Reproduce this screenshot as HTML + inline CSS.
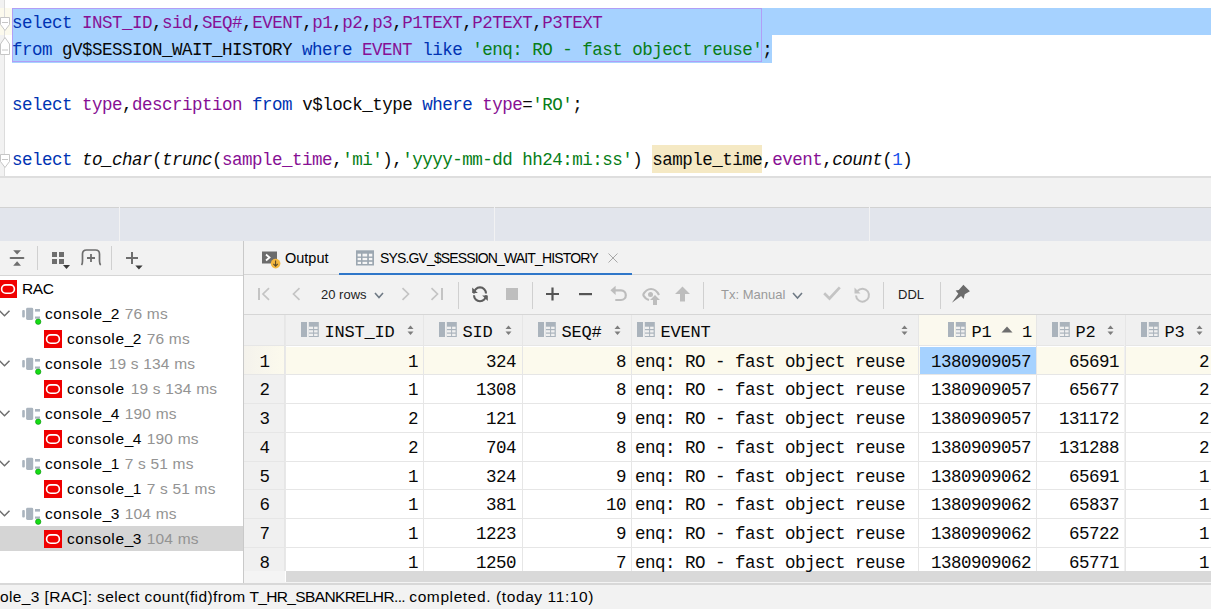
<!DOCTYPE html><html><head><meta charset="utf-8"><style>
*{margin:0;padding:0;box-sizing:border-box}
html,body{width:1211px;height:609px;overflow:hidden;background:#fff;position:relative;font-family:"Liberation Sans",sans-serif}
.a{position:absolute}
svg.a{overflow:visible}
.ln{position:absolute;left:12px;height:27.4px;line-height:27.4px;font-size:17.5px;letter-spacing:-0.5px;white-space:pre;font-family:"Liberation Mono",monospace;color:#080808}
.kw{color:#0033b3}.id{color:#871094}.st{color:#067d17}.nu{color:#1750eb}.fn{font-style:italic}
.c{position:absolute;height:28px;line-height:28px;font-size:17.5px;letter-spacing:-0.5px;font-family:"Liberation Mono",monospace;white-space:pre;color:#080808}
.r{text-align:right}
.t{position:absolute;font-size:15.5px;white-space:pre;color:#000;line-height:1}
.tm{color:#939393}
</style></head><body>
<div class="a" style="left:0px;top:0px;width:1211px;height:176px;background:#fff;"></div>
<div class="a" style="left:0px;top:0px;width:4px;height:176px;background:#f2f2f2;"></div>
<div class="a" style="left:0px;top:8px;width:12px;height:27px;background:#fcfaed;"></div>
<div class="a" style="left:4px;top:0px;width:1px;height:176px;background:#dcdcdc;"></div>
<div class="a" style="left:12px;top:8px;width:1199px;height:27px;background:#a6d2ff;"></div>
<div class="a" style="left:12px;top:35px;width:760px;height:28px;background:#a6d2ff;"></div>
<div class="a" style="left:12px;top:8px;width:750px;height:54px;border:1px solid #b09ef6"></div>
<div class="a" style="left:652px;top:145px;width:110px;height:28px;background:#f5e9c4;"></div>
<svg class="a" style="left:0px;top:16px;" width="11" height="17" viewBox="0 0 11 17"><path d="M0.5 1.5H9.5V8.5L5 14.5L0.5 8.5Z" fill="#fff" stroke="#c6c6c6" stroke-width="1"/><path d="M2 6.5H8" stroke="#c6c6c6" stroke-width="1"/></svg>
<svg class="a" style="left:0px;top:36px;" width="11" height="20" viewBox="0 0 11 20"><path d="M0.5 18.5H9.5V8L5 1.5L0.5 8Z" fill="#fff" stroke="#c6c6c6" stroke-width="1"/><path d="M2 14H8" stroke="#c6c6c6" stroke-width="1"/></svg>
<svg class="a" style="left:0px;top:153px;" width="11" height="17" viewBox="0 0 11 17"><path d="M0.5 1.5H9.5V8.5L5 14.5L0.5 8.5Z" fill="#fff" stroke="#c6c6c6" stroke-width="1"/><path d="M2 6.5H8" stroke="#c6c6c6" stroke-width="1"/></svg>
<div class="ln" style="top:9.5px"><span class="kw">select</span> <span class="id">INST_ID</span>,<span class="id">sid</span>,<span class="id">SEQ#</span>,<span class="id">EVENT</span>,<span class="id">p1</span>,<span class="id">p2</span>,<span class="id">p3</span>,<span class="id">P1TEXT</span>,<span class="id">P2TEXT</span>,<span class="id">P3TEXT</span></div>
<div class="ln" style="top:36.9px"><span class="kw">from</span> gV$SESSION_WAIT_HISTORY <span class="kw">where</span> <span class="id">EVENT</span> <span class="kw">like</span> <span class="st">'enq: RO - fast object reuse'</span>;</div>
<div class="ln" style="top:91.7px"><span class="kw">select</span> <span class="id">type</span>,<span class="id">description</span> <span class="kw">from</span> v$lock_type <span class="kw">where</span> <span class="id">type</span>=<span class="st">'RO'</span>;</div>
<div class="ln" style="top:146.5px"><span class="kw">select</span> <span class="fn">to_char</span>(<span class="fn">trunc</span>(<span class="id">sample_time</span>,<span class="st">'mi'</span>),<span class="st">'yyyy-mm-dd hh24:mi:ss'</span>) sample_time,<span class="id">event</span>,<span class="fn">count</span>(<span class="nu">1</span>)</div>
<div class="a" style="left:0px;top:176px;width:1211px;height:2px;background:#dedede;"></div>
<div class="a" style="left:0px;top:178px;width:1211px;height:29px;background:#f2f2f2;"></div>
<div class="a" style="left:0px;top:207px;width:1211px;height:1px;background:#d2d2d2;"></div>
<div class="a" style="left:0px;top:208px;width:1211px;height:33px;background:#e2e5ec;"></div>
<div class="a" style="left:119px;top:207px;width:1px;height:34px;background:#f2f2f3;"></div>
<div class="a" style="left:494px;top:207px;width:1px;height:34px;background:#f2f2f3;"></div>
<div class="a" style="left:869px;top:207px;width:1px;height:34px;background:#f2f2f3;"></div>
<div class="a" style="left:0px;top:241px;width:243px;height:34px;background:#f2f2f2;"></div>
<div class="a" style="left:0px;top:275px;width:243px;height:1px;background:#d6d6d6;"></div>
<div class="a" style="left:0px;top:276px;width:243px;height:307px;background:#fff;"></div>
<div class="a" style="left:243px;top:241px;width:1px;height:342px;background:#c9c9c9;"></div>
<div class="a" style="left:0px;top:526px;width:243px;height:25px;background:#d5d5d5;"></div>
<svg class="a" style="left:9px;top:249px;" width="16" height="17" viewBox="0 0 16 17"><path d="M4.2 1.3h7.8l-3.9 4.3z" fill="#6e6e6e"/><rect x="0.6" y="8" width="14.8" height="2" rx="1" fill="#6e6e6e"/><path d="M4.2 16.7h7.8l-3.9-4.4z" fill="#6e6e6e"/></svg>
<div class="a" style="left:37px;top:246px;width:1px;height:24px;background:#d0d0d0;"></div>
<svg class="a" style="left:51px;top:252px;" width="20" height="18" viewBox="0 0 20 18"><rect x="1" y="0" width="5" height="5" fill="#6e6e6e"/><rect x="8" y="0" width="5" height="5" fill="#6e6e6e"/><rect x="1" y="7" width="5" height="5" fill="#6e6e6e"/><rect x="8" y="7" width="5" height="5" fill="#6e6e6e"/><path d="M12 13h7l-3.5 4z" fill="#3a3a3a"/></svg>
<svg class="a" style="left:80px;top:249px;" width="22" height="17" viewBox="0 0 22 17"><path d="M1.5 16c1-1 1-2 1-4V5c0-3 2-4 4-4h9c2 0 4 1 4 4v7c0 2 0 3 1.2 4" fill="none" stroke="#6e6e6e" stroke-width="1.7"/><path d="M11 5v8M7 9h8" stroke="#6e6e6e" stroke-width="1.8"/></svg>
<div class="a" style="left:111px;top:246px;width:1px;height:24px;background:#d0d0d0;"></div>
<svg class="a" style="left:125px;top:251px;" width="20" height="19" viewBox="0 0 20 19"><path d="M7 1v12M1 7h12" stroke="#6e6e6e" stroke-width="2"/><path d="M10.3 14.5h7.3l-3.65 4z" fill="#3a3a3a"/></svg>
<svg class="a" style="left:-1px;top:280px;" width="18" height="18" viewBox="0 0 18 18"><rect width="18" height="18" fill="#f00000"/><rect x="2.6" y="4.9" width="12.8" height="8.3" rx="4.15" fill="none" stroke="#fff" stroke-width="1.6"/></svg>
<div class="t" style="left:22px;top:281px;letter-spacing:-0.4px">RAC</div>
<svg class="a" style="left:-1px;top:309px;" width="12" height="8" viewBox="0 0 12 8"><path d="M0.5 1.7l5 5 5-5" fill="none" stroke="#6e6e6e" stroke-width="1.5"/></svg>
<svg class="a" style="left:22px;top:307px;" width="20" height="18" viewBox="0 0 20 18"><rect x="0.2" y="3.1" width="2.6" height="7.4" rx="1" fill="#aab4be"/><rect x="4.1" y="0.8" width="7.1" height="12.1" rx="1.4" fill="#aab4be"/><rect x="13" y="2" width="5" height="2.6" fill="#aab4be"/><rect x="13" y="9.5" width="5" height="2.2" fill="#aab4be"/><circle cx="16.2" cy="14.7" r="2.7" fill="#16dc16" stroke="#0c8f0c" stroke-width="0.6"/></svg>
<div class="t" style="left:45px;top:306.3px"><span style="letter-spacing:0.6px">console</span><span style="letter-spacing:-0.6px">_2</span><span class="tm" style="margin-left:6px;letter-spacing:0.2px">76 ms</span></div>
<svg class="a" style="left:44px;top:330px;" width="18" height="18" viewBox="0 0 18 18"><rect width="18" height="18" fill="#f00000"/><rect x="2.6" y="4.9" width="12.8" height="8.3" rx="4.15" fill="none" stroke="#fff" stroke-width="1.6"/></svg>
<div class="t" style="left:67px;top:331.3px"><span style="letter-spacing:0.6px">console</span><span style="letter-spacing:-0.6px">_2</span><span class="tm" style="margin-left:6px;letter-spacing:0.2px">76 ms</span></div>
<svg class="a" style="left:-1px;top:359px;" width="12" height="8" viewBox="0 0 12 8"><path d="M0.5 1.7l5 5 5-5" fill="none" stroke="#6e6e6e" stroke-width="1.5"/></svg>
<svg class="a" style="left:22px;top:357px;" width="20" height="18" viewBox="0 0 20 18"><rect x="0.2" y="3.1" width="2.6" height="7.4" rx="1" fill="#aab4be"/><rect x="4.1" y="0.8" width="7.1" height="12.1" rx="1.4" fill="#aab4be"/><rect x="13" y="2" width="5" height="2.6" fill="#aab4be"/><rect x="13" y="9.5" width="5" height="2.2" fill="#aab4be"/><circle cx="16.2" cy="14.7" r="2.7" fill="#16dc16" stroke="#0c8f0c" stroke-width="0.6"/></svg>
<div class="t" style="left:45px;top:356.3px"><span style="letter-spacing:0.6px">console</span><span class="tm" style="margin-left:6px;letter-spacing:0.2px">19 s 134 ms</span></div>
<svg class="a" style="left:44px;top:380px;" width="18" height="18" viewBox="0 0 18 18"><rect width="18" height="18" fill="#f00000"/><rect x="2.6" y="4.9" width="12.8" height="8.3" rx="4.15" fill="none" stroke="#fff" stroke-width="1.6"/></svg>
<div class="t" style="left:67px;top:381.3px"><span style="letter-spacing:0.6px">console</span><span class="tm" style="margin-left:6px;letter-spacing:0.2px">19 s 134 ms</span></div>
<svg class="a" style="left:-1px;top:409px;" width="12" height="8" viewBox="0 0 12 8"><path d="M0.5 1.7l5 5 5-5" fill="none" stroke="#6e6e6e" stroke-width="1.5"/></svg>
<svg class="a" style="left:22px;top:407px;" width="20" height="18" viewBox="0 0 20 18"><rect x="0.2" y="3.1" width="2.6" height="7.4" rx="1" fill="#aab4be"/><rect x="4.1" y="0.8" width="7.1" height="12.1" rx="1.4" fill="#aab4be"/><rect x="13" y="2" width="5" height="2.6" fill="#aab4be"/><rect x="13" y="9.5" width="5" height="2.2" fill="#aab4be"/><circle cx="16.2" cy="14.7" r="2.7" fill="#16dc16" stroke="#0c8f0c" stroke-width="0.6"/></svg>
<div class="t" style="left:45px;top:406.3px"><span style="letter-spacing:0.6px">console</span><span style="letter-spacing:-0.6px">_4</span><span class="tm" style="margin-left:6px;letter-spacing:0.2px">190 ms</span></div>
<svg class="a" style="left:44px;top:430px;" width="18" height="18" viewBox="0 0 18 18"><rect width="18" height="18" fill="#f00000"/><rect x="2.6" y="4.9" width="12.8" height="8.3" rx="4.15" fill="none" stroke="#fff" stroke-width="1.6"/></svg>
<div class="t" style="left:67px;top:431.3px"><span style="letter-spacing:0.6px">console</span><span style="letter-spacing:-0.6px">_4</span><span class="tm" style="margin-left:6px;letter-spacing:0.2px">190 ms</span></div>
<svg class="a" style="left:-1px;top:459px;" width="12" height="8" viewBox="0 0 12 8"><path d="M0.5 1.7l5 5 5-5" fill="none" stroke="#6e6e6e" stroke-width="1.5"/></svg>
<svg class="a" style="left:22px;top:457px;" width="20" height="18" viewBox="0 0 20 18"><rect x="0.2" y="3.1" width="2.6" height="7.4" rx="1" fill="#aab4be"/><rect x="4.1" y="0.8" width="7.1" height="12.1" rx="1.4" fill="#aab4be"/><rect x="13" y="2" width="5" height="2.6" fill="#aab4be"/><rect x="13" y="9.5" width="5" height="2.2" fill="#aab4be"/><circle cx="16.2" cy="14.7" r="2.7" fill="#16dc16" stroke="#0c8f0c" stroke-width="0.6"/></svg>
<div class="t" style="left:45px;top:456.3px"><span style="letter-spacing:0.6px">console</span><span style="letter-spacing:-0.6px">_1</span><span class="tm" style="margin-left:6px;letter-spacing:0.2px">7 s 51 ms</span></div>
<svg class="a" style="left:44px;top:480px;" width="18" height="18" viewBox="0 0 18 18"><rect width="18" height="18" fill="#f00000"/><rect x="2.6" y="4.9" width="12.8" height="8.3" rx="4.15" fill="none" stroke="#fff" stroke-width="1.6"/></svg>
<div class="t" style="left:67px;top:481.3px"><span style="letter-spacing:0.6px">console</span><span style="letter-spacing:-0.6px">_1</span><span class="tm" style="margin-left:6px;letter-spacing:0.2px">7 s 51 ms</span></div>
<svg class="a" style="left:-1px;top:509px;" width="12" height="8" viewBox="0 0 12 8"><path d="M0.5 1.7l5 5 5-5" fill="none" stroke="#6e6e6e" stroke-width="1.5"/></svg>
<svg class="a" style="left:22px;top:507px;" width="20" height="18" viewBox="0 0 20 18"><rect x="0.2" y="3.1" width="2.6" height="7.4" rx="1" fill="#aab4be"/><rect x="4.1" y="0.8" width="7.1" height="12.1" rx="1.4" fill="#aab4be"/><rect x="13" y="2" width="5" height="2.6" fill="#aab4be"/><rect x="13" y="9.5" width="5" height="2.2" fill="#aab4be"/><circle cx="16.2" cy="14.7" r="2.7" fill="#16dc16" stroke="#0c8f0c" stroke-width="0.6"/></svg>
<div class="t" style="left:45px;top:506.3px"><span style="letter-spacing:0.6px">console</span><span style="letter-spacing:-0.6px">_3</span><span class="tm" style="margin-left:6px;letter-spacing:0.2px">104 ms</span></div>
<svg class="a" style="left:44px;top:530px;" width="18" height="18" viewBox="0 0 18 18"><rect width="18" height="18" fill="#f00000"/><rect x="2.6" y="4.9" width="12.8" height="8.3" rx="4.15" fill="none" stroke="#fff" stroke-width="1.6"/></svg>
<div class="t" style="left:67px;top:531.3px"><span style="letter-spacing:0.6px">console</span><span style="letter-spacing:-0.6px">_3</span><span class="tm" style="margin-left:6px;letter-spacing:0.2px">104 ms</span></div>
<div class="a" style="left:244px;top:241px;width:967px;height:33px;background:#f2f2f2;"></div>
<div class="a" style="left:244px;top:274px;width:967px;height:1px;background:#d6d6d6;"></div>
<div class="a" style="left:339px;top:273px;width:293px;height:2px;background:#2f77c9;"></div>
<div class="a" style="left:244px;top:275px;width:967px;height:39px;background:#f2f2f2;"></div>
<div class="a" style="left:244px;top:314px;width:967px;height:1px;background:#d6d6d6;"></div>
<svg class="a" style="left:262px;top:251px;" width="16" height="18" viewBox="0 0 16 18"><rect x="0" y="0.5" width="15" height="12" fill="#6c6c6c"/><path d="M4 3.5l3.5 3-3.5 3" fill="none" stroke="#fff" stroke-width="1.8"/><circle cx="13.6" cy="12.6" r="4.8" fill="#f4b73f"/><path d="M13.6 9.5v5.5M11.4 12.8l2.2 2.3 2.2-2.3" fill="none" stroke="#5a4a2a" stroke-width="1.1"/></svg>
<div class="a" style="left:285px;top:251px;font-size:14.5px;line-height:1;white-space:pre">Output</div>
<svg class="a" style="left:356px;top:250px;" width="18" height="16" viewBox="0 0 18 16"><rect x="0" y="0.3" width="18" height="15.2" fill="#9ca7b1"/><g fill="#f6f6f6"><rect x="1.6" y="3.7" width="3.4" height="2.8"/><rect x="6.5" y="3.7" width="4.699999999999999" height="2.8"/><rect x="12.9" y="3.7" width="3.4000000000000004" height="2.8"/><rect x="1.6" y="7.9" width="3.4" height="2.3"/><rect x="6.5" y="7.9" width="4.699999999999999" height="2.3"/><rect x="12.9" y="7.9" width="3.4000000000000004" height="2.3"/><rect x="1.6" y="11.8" width="3.4" height="2.2"/><rect x="6.5" y="11.8" width="4.699999999999999" height="2.2"/><rect x="12.9" y="11.8" width="3.4000000000000004" height="2.2"/></g></svg>
<div class="a" style="left:380px;top:251px;font-size:14px;letter-spacing:-0.86px;line-height:1;white-space:pre">SYS.GV_$SESSION_WAIT_HISTORY</div>
<svg class="a" style="left:608px;top:253px;" width="10" height="10" viewBox="0 0 10 10"><path d="M0.5 0.5l9 9M9.5 0.5l-9 9" stroke="#a8a8a8" stroke-width="1"/></svg>
<svg class="a" style="left:257px;top:287px;" width="14" height="14" viewBox="0 0 14 14"><path d="M2 1v12" stroke="#c4c4c4" stroke-width="2"/><path d="M12 1.2l-6 5.8 6 5.8" fill="none" stroke="#c4c4c4" stroke-width="1.7"/></svg>
<svg class="a" style="left:292px;top:287px;" width="9" height="14" viewBox="0 0 9 14"><path d="M7.5 1.2l-6 5.8 6 5.8" fill="none" stroke="#c4c4c4" stroke-width="1.7"/></svg>
<div class="a" style="left:321px;top:288px;font-size:13px;line-height:1;white-space:pre;color:#222">20 rows</div>
<svg class="a" style="left:374px;top:292px;" width="10" height="7" viewBox="0 0 10 7"><path d="M1 1l4 4.5 4-4.5" fill="none" stroke="#6f7a85" stroke-width="1.6"/></svg>
<svg class="a" style="left:401px;top:287px;" width="9" height="14" viewBox="0 0 9 14"><path d="M1.5 1.2l6 5.8-6 5.8" fill="none" stroke="#c4c4c4" stroke-width="1.7"/></svg>
<svg class="a" style="left:430px;top:287px;" width="14" height="14" viewBox="0 0 14 14"><path d="M12 1v12" stroke="#c4c4c4" stroke-width="2"/><path d="M1.5 1.2l6 5.8-6 5.8" fill="none" stroke="#c4c4c4" stroke-width="1.7"/></svg>
<div class="a" style="left:458px;top:282px;width:1px;height:27px;background:#d0d0d0;"></div>
<svg class="a" style="left:471px;top:286px;" width="17" height="17" viewBox="0 0 17 17"><path d="M3 7.4A6 6 0 0 1 15 7.4M3 9.2A6 6 0 0 0 15 9.2" fill="none" stroke="#5e5e5e" stroke-width="2.1"/><path d="M1.2 1.5v5.6h5.6z" fill="#5e5e5e"/><path d="M16.8 15v-5.6h-5.6z" fill="#5e5e5e"/></svg>
<div class="a" style="left:506px;top:288px;width:12px;height:12px;background:#bebebe;"></div>
<div class="a" style="left:532px;top:282px;width:1px;height:27px;background:#d0d0d0;"></div>
<svg class="a" style="left:546px;top:287px;" width="14" height="14" viewBox="0 0 14 14"><path d="M6.5 0.5v13M0 7h13" stroke="#555555" stroke-width="2.2"/></svg>
<svg class="a" style="left:579px;top:292px;" width="14" height="4" viewBox="0 0 14 4"><rect x="0" y="1" width="13" height="2.2" fill="#555555"/></svg>
<svg class="a" style="left:610px;top:286px;" width="18" height="17" viewBox="0 0 18 17"><path d="M3 4.3h8c2.8 0 4.8 2.2 4.8 4.85S13.8 14 11 14H5.3" fill="none" stroke="#bdbdbd" stroke-width="2.2"/><path d="M0.4 4.3L5.6 -0.3V8.9z" fill="#bdbdbd"/></svg>
<svg class="a" style="left:642px;top:287px;" width="19" height="18" viewBox="0 0 19 18"><path d="M1 8c2-4 5-6 8-6s6 2 8 6" fill="none" stroke="#bdbdbd" stroke-width="2.2"/><path d="M1 8c2 3 4 4.5 6 5" fill="none" stroke="#bdbdbd" stroke-width="2.2"/><circle cx="8.5" cy="7.5" r="2.5" fill="#bdbdbd"/><path d="M13 8l-5 5h3v5h4v-5h3z" fill="#bdbdbd"/></svg>
<svg class="a" style="left:675px;top:286px;" width="16" height="16" viewBox="0 0 16 16"><path d="M7.5 0.5L0 8h5v7.5h5V8h5z" fill="#bdbdbd"/></svg>
<div class="a" style="left:703px;top:282px;width:1px;height:27px;background:#d0d0d0;"></div>
<div class="a" style="left:721px;top:288px;font-size:13px;line-height:1;white-space:pre;color:#9a9a9a">Tx: Manual</div>
<svg class="a" style="left:792px;top:292px;" width="11" height="8" viewBox="0 0 11 8"><path d="M1 1l4.5 5 4.5-5" fill="none" stroke="#6f7a85" stroke-width="1.6"/></svg>
<svg class="a" style="left:823px;top:286px;" width="18" height="15" viewBox="0 0 18 15"><path d="M1.2 7.2l5.3 5.3L16.8 1.3" fill="none" stroke="#c4c4c4" stroke-width="2.7"/></svg>
<svg class="a" style="left:854px;top:286px;" width="17" height="17" viewBox="0 0 17 17"><path d="M3.5 5A6.5 6.5 0 1 1 2 9.5" fill="none" stroke="#c2c2c2" stroke-width="2"/><path d="M0.5 1.5v6h6z" fill="#c2c2c2"/></svg>
<div class="a" style="left:883px;top:282px;width:1px;height:27px;background:#d0d0d0;"></div>
<div class="a" style="left:898px;top:288px;font-size:13px;line-height:1;white-space:pre;color:#222">DDL</div>
<div class="a" style="left:940px;top:282px;width:1px;height:27px;background:#d0d0d0;"></div>
<svg class="a" style="left:945px;top:280px;" width="30" height="28" viewBox="0 0 30 28"><path d="M10.6 10.4L13.8 9.9L18.4 4.8L24.9 11.3L19.8 14.3L18.6 18.9L16.1 15.9L6.9 22.8L13.3 13.8Z" fill="#6b6b6b"/></svg>
<div class="a" style="left:244px;top:315px;width:967px;height:268px;background:#fff;"></div>
<div class="a" style="left:244px;top:315px;width:967px;height:30px;background:#f0f0f0;"></div>
<div class="a" style="left:919px;top:315px;width:117px;height:30px;background:#fbf9ee;"></div>
<div class="a" style="left:244px;top:345px;width:41px;height:226px;background:#f0f0f0;"></div>
<div class="a" style="left:244px;top:571px;width:41px;height:12px;background:#f4f4f4;"></div>
<div class="a" style="left:285px;top:346px;width:926px;height:28px;background:#fcfaed;"></div>
<div class="a" style="left:244px;top:346px;width:41px;height:28px;background:linear-gradient(90deg,#f4f2ec,#fcfaed)"></div>
<div class="a" style="left:286px;top:346px;width:925px;height:1px;background:#ffffff;"></div>
<div class="a" style="left:920px;top:347px;width:116px;height:27px;background:#a6d2ff;"></div>
<div class="a" style="left:244px;top:374px;width:967px;height:1px;background:#e6e6e6;"></div>
<div class="a" style="left:244px;top:403px;width:967px;height:1px;background:#e6e6e6;"></div>
<div class="a" style="left:244px;top:432px;width:967px;height:1px;background:#e6e6e6;"></div>
<div class="a" style="left:244px;top:461px;width:967px;height:1px;background:#e6e6e6;"></div>
<div class="a" style="left:244px;top:489px;width:967px;height:1px;background:#e6e6e6;"></div>
<div class="a" style="left:244px;top:518px;width:967px;height:1px;background:#e6e6e6;"></div>
<div class="a" style="left:244px;top:547px;width:967px;height:1px;background:#e6e6e6;"></div>
<div class="a" style="left:244px;top:345px;width:967px;height:1px;background:#e6e6e6;"></div>
<div class="a" style="left:284px;top:315px;width:1px;height:256px;background:#e6e6e6;"></div>
<div class="a" style="left:423px;top:315px;width:1px;height:256px;background:#e6e6e6;"></div>
<div class="a" style="left:522px;top:315px;width:1px;height:256px;background:#e6e6e6;"></div>
<div class="a" style="left:631px;top:315px;width:1px;height:256px;background:#e6e6e6;"></div>
<div class="a" style="left:918px;top:315px;width:1px;height:256px;background:#e6e6e6;"></div>
<div class="a" style="left:1036px;top:315px;width:1px;height:256px;background:#e6e6e6;"></div>
<div class="a" style="left:1125px;top:315px;width:1px;height:256px;background:#e6e6e6;"></div>
<div class="a" style="left:1124px;top:315px;width:1px;height:256px;background:#f0f0f0;"></div>
<div class="a" style="left:285px;top:315px;width:1px;height:256px;background:#e8e8e8;"></div>
<div class="a" style="left:286px;top:571px;width:925px;height:11px;background:#d9d9d9;"></div>
<div class="a" style="left:244px;top:582px;width:967px;height:1px;background:#f4f4f4;"></div>
<svg class="a" style="left:301px;top:322px;" width="18" height="15" viewBox="0 0 18 15"><rect x="0" y="0" width="6" height="15" fill="#aab3bc"/><rect x="7.8" y="0" width="10" height="15" fill="#aab3bc"/><g fill="#f0f0f0"><rect x="7.8" y="4.7" width="4.3" height="2.3"/><rect x="13.1" y="4.7" width="3.5" height="2.3"/><rect x="7.8" y="8.2" width="4.3" height="2.3"/><rect x="13.1" y="8.2" width="3.5" height="2.3"/><rect x="7.8" y="11.7" width="4.3" height="2.3"/><rect x="13.1" y="11.7" width="3.5" height="2.3"/></g></svg>
<div class="a" style="left:324.5px;top:324px;font-family:'Liberation Mono',monospace;font-size:17px;letter-spacing:-0.2px;line-height:1;white-space:pre;color:#080808">INST_ID</div>
<svg class="a" style="left:407px;top:325px;" width="7" height="11" viewBox="0 0 7 11"><path d="M0.5 4L3.5 0.5 6.5 4z" fill="#7d7d7d"/><path d="M0.5 6.5L3.5 10 6.5 6.5z" fill="#7d7d7d"/></svg>
<svg class="a" style="left:439px;top:322px;" width="18" height="15" viewBox="0 0 18 15"><rect x="0" y="0" width="6" height="15" fill="#aab3bc"/><rect x="7.8" y="0" width="10" height="15" fill="#aab3bc"/><g fill="#f0f0f0"><rect x="7.8" y="4.7" width="4.3" height="2.3"/><rect x="13.1" y="4.7" width="3.5" height="2.3"/><rect x="7.8" y="8.2" width="4.3" height="2.3"/><rect x="13.1" y="8.2" width="3.5" height="2.3"/><rect x="7.8" y="11.7" width="4.3" height="2.3"/><rect x="13.1" y="11.7" width="3.5" height="2.3"/></g></svg>
<div class="a" style="left:462.5px;top:324px;font-family:'Liberation Mono',monospace;font-size:17px;letter-spacing:-0.2px;line-height:1;white-space:pre;color:#080808">SID</div>
<svg class="a" style="left:505px;top:325px;" width="7" height="11" viewBox="0 0 7 11"><path d="M0.5 4L3.5 0.5 6.5 4z" fill="#7d7d7d"/><path d="M0.5 6.5L3.5 10 6.5 6.5z" fill="#7d7d7d"/></svg>
<svg class="a" style="left:538px;top:322px;" width="18" height="15" viewBox="0 0 18 15"><rect x="0" y="0" width="6" height="15" fill="#aab3bc"/><rect x="7.8" y="0" width="10" height="15" fill="#aab3bc"/><g fill="#f0f0f0"><rect x="7.8" y="4.7" width="4.3" height="2.3"/><rect x="13.1" y="4.7" width="3.5" height="2.3"/><rect x="7.8" y="8.2" width="4.3" height="2.3"/><rect x="13.1" y="8.2" width="3.5" height="2.3"/><rect x="7.8" y="11.7" width="4.3" height="2.3"/><rect x="13.1" y="11.7" width="3.5" height="2.3"/></g></svg>
<div class="a" style="left:561.5px;top:324px;font-family:'Liberation Mono',monospace;font-size:17px;letter-spacing:-0.2px;line-height:1;white-space:pre;color:#080808">SEQ#</div>
<svg class="a" style="left:614px;top:325px;" width="7" height="11" viewBox="0 0 7 11"><path d="M0.5 4L3.5 0.5 6.5 4z" fill="#7d7d7d"/><path d="M0.5 6.5L3.5 10 6.5 6.5z" fill="#7d7d7d"/></svg>
<svg class="a" style="left:637px;top:322px;" width="18" height="15" viewBox="0 0 18 15"><rect x="0" y="0" width="6" height="15" fill="#aab3bc"/><rect x="7.8" y="0" width="10" height="15" fill="#aab3bc"/><g fill="#f0f0f0"><rect x="7.8" y="4.7" width="4.3" height="2.3"/><rect x="13.1" y="4.7" width="3.5" height="2.3"/><rect x="7.8" y="8.2" width="4.3" height="2.3"/><rect x="13.1" y="8.2" width="3.5" height="2.3"/><rect x="7.8" y="11.7" width="4.3" height="2.3"/><rect x="13.1" y="11.7" width="3.5" height="2.3"/></g></svg>
<div class="a" style="left:660.5px;top:324px;font-family:'Liberation Mono',monospace;font-size:17px;letter-spacing:-0.2px;line-height:1;white-space:pre;color:#080808">EVENT</div>
<svg class="a" style="left:901px;top:325px;" width="7" height="11" viewBox="0 0 7 11"><path d="M0.5 4L3.5 0.5 6.5 4z" fill="#7d7d7d"/><path d="M0.5 6.5L3.5 10 6.5 6.5z" fill="#7d7d7d"/></svg>
<svg class="a" style="left:948px;top:322px;" width="18" height="15" viewBox="0 0 18 15"><rect x="0" y="0" width="6" height="15" fill="#aab3bc"/><rect x="7.8" y="0" width="10" height="15" fill="#aab3bc"/><g fill="#f0f0f0"><rect x="7.8" y="4.7" width="4.3" height="2.3"/><rect x="13.1" y="4.7" width="3.5" height="2.3"/><rect x="7.8" y="8.2" width="4.3" height="2.3"/><rect x="13.1" y="8.2" width="3.5" height="2.3"/><rect x="7.8" y="11.7" width="4.3" height="2.3"/><rect x="13.1" y="11.7" width="3.5" height="2.3"/></g></svg>
<div class="a" style="left:971.5px;top:324px;font-family:'Liberation Mono',monospace;font-size:17px;letter-spacing:-0.2px;line-height:1;white-space:pre;color:#080808">P1</div>
<svg class="a" style="left:1052px;top:322px;" width="18" height="15" viewBox="0 0 18 15"><rect x="0" y="0" width="6" height="15" fill="#aab3bc"/><rect x="7.8" y="0" width="10" height="15" fill="#aab3bc"/><g fill="#f0f0f0"><rect x="7.8" y="4.7" width="4.3" height="2.3"/><rect x="13.1" y="4.7" width="3.5" height="2.3"/><rect x="7.8" y="8.2" width="4.3" height="2.3"/><rect x="13.1" y="8.2" width="3.5" height="2.3"/><rect x="7.8" y="11.7" width="4.3" height="2.3"/><rect x="13.1" y="11.7" width="3.5" height="2.3"/></g></svg>
<div class="a" style="left:1075.5px;top:324px;font-family:'Liberation Mono',monospace;font-size:17px;letter-spacing:-0.2px;line-height:1;white-space:pre;color:#080808">P2</div>
<svg class="a" style="left:1107px;top:325px;" width="7" height="11" viewBox="0 0 7 11"><path d="M0.5 4L3.5 0.5 6.5 4z" fill="#7d7d7d"/><path d="M0.5 6.5L3.5 10 6.5 6.5z" fill="#7d7d7d"/></svg>
<svg class="a" style="left:1141px;top:322px;" width="18" height="15" viewBox="0 0 18 15"><rect x="0" y="0" width="6" height="15" fill="#aab3bc"/><rect x="7.8" y="0" width="10" height="15" fill="#aab3bc"/><g fill="#f0f0f0"><rect x="7.8" y="4.7" width="4.3" height="2.3"/><rect x="13.1" y="4.7" width="3.5" height="2.3"/><rect x="7.8" y="8.2" width="4.3" height="2.3"/><rect x="13.1" y="8.2" width="3.5" height="2.3"/><rect x="7.8" y="11.7" width="4.3" height="2.3"/><rect x="13.1" y="11.7" width="3.5" height="2.3"/></g></svg>
<div class="a" style="left:1164.5px;top:324px;font-family:'Liberation Mono',monospace;font-size:17px;letter-spacing:-0.2px;line-height:1;white-space:pre;color:#080808">P3</div>
<svg class="a" style="left:1196px;top:325px;" width="7" height="11" viewBox="0 0 7 11"><path d="M0.5 4L3.5 0.5 6.5 4z" fill="#7d7d7d"/><path d="M0.5 6.5L3.5 10 6.5 6.5z" fill="#7d7d7d"/></svg>
<svg class="a" style="left:1001px;top:325px;" width="12" height="8" viewBox="0 0 12 8"><path d="M0.5 7.5L6 1.5 11.5 7.5z" fill="#6e6e6e"/></svg>
<div class="a" style="left:1022px;top:324px;font-family:'Liberation Mono',monospace;font-size:17px;letter-spacing:-0.2px;line-height:1;white-space:pre;color:#080808">1</div>
<div class="c" style="left:244px;width:41px;top:348.0px;text-align:center">1</div>
<div class="c r" style="left:285px;width:133px;top:348.0px">1</div>
<div class="c r" style="left:424px;width:92px;top:348.0px">324</div>
<div class="c r" style="left:522px;width:104px;top:348.0px">8</div>
<div class="c r" style="left:919px;width:112px;top:348.0px">1380909057</div>
<div class="c r" style="left:1036px;width:83px;top:348.0px">65691</div>
<div class="c r" style="left:1125px;width:84px;top:348.0px">2</div>
<div class="c" style="left:635px;top:348.0px">enq: RO - fast object reuse</div>
<div class="c" style="left:244px;width:41px;top:375.7px;text-align:center">2</div>
<div class="c r" style="left:285px;width:133px;top:375.7px">1</div>
<div class="c r" style="left:424px;width:92px;top:375.7px">1308</div>
<div class="c r" style="left:522px;width:104px;top:375.7px">8</div>
<div class="c r" style="left:919px;width:112px;top:375.7px">1380909057</div>
<div class="c r" style="left:1036px;width:83px;top:375.7px">65677</div>
<div class="c r" style="left:1125px;width:84px;top:375.7px">2</div>
<div class="c" style="left:635px;top:375.7px">enq: RO - fast object reuse</div>
<div class="c" style="left:244px;width:41px;top:405.4px;text-align:center">3</div>
<div class="c r" style="left:285px;width:133px;top:405.4px">2</div>
<div class="c r" style="left:424px;width:92px;top:405.4px">121</div>
<div class="c r" style="left:522px;width:104px;top:405.4px">9</div>
<div class="c r" style="left:919px;width:112px;top:405.4px">1380909057</div>
<div class="c r" style="left:1036px;width:83px;top:405.4px">131172</div>
<div class="c r" style="left:1125px;width:84px;top:405.4px">2</div>
<div class="c" style="left:635px;top:405.4px">enq: RO - fast object reuse</div>
<div class="c" style="left:244px;width:41px;top:434.1px;text-align:center">4</div>
<div class="c r" style="left:285px;width:133px;top:434.1px">2</div>
<div class="c r" style="left:424px;width:92px;top:434.1px">704</div>
<div class="c r" style="left:522px;width:104px;top:434.1px">8</div>
<div class="c r" style="left:919px;width:112px;top:434.1px">1380909057</div>
<div class="c r" style="left:1036px;width:83px;top:434.1px">131288</div>
<div class="c r" style="left:1125px;width:84px;top:434.1px">2</div>
<div class="c" style="left:635px;top:434.1px">enq: RO - fast object reuse</div>
<div class="c" style="left:244px;width:41px;top:462.8px;text-align:center">5</div>
<div class="c r" style="left:285px;width:133px;top:462.8px">1</div>
<div class="c r" style="left:424px;width:92px;top:462.8px">324</div>
<div class="c r" style="left:522px;width:104px;top:462.8px">9</div>
<div class="c r" style="left:919px;width:112px;top:462.8px">1380909062</div>
<div class="c r" style="left:1036px;width:83px;top:462.8px">65691</div>
<div class="c r" style="left:1125px;width:84px;top:462.8px">1</div>
<div class="c" style="left:635px;top:462.8px">enq: RO - fast object reuse</div>
<div class="c" style="left:244px;width:41px;top:490.5px;text-align:center">6</div>
<div class="c r" style="left:285px;width:133px;top:490.5px">1</div>
<div class="c r" style="left:424px;width:92px;top:490.5px">381</div>
<div class="c r" style="left:522px;width:104px;top:490.5px">10</div>
<div class="c r" style="left:919px;width:112px;top:490.5px">1380909062</div>
<div class="c r" style="left:1036px;width:83px;top:490.5px">65837</div>
<div class="c r" style="left:1125px;width:84px;top:490.5px">1</div>
<div class="c" style="left:635px;top:490.5px">enq: RO - fast object reuse</div>
<div class="c" style="left:244px;width:41px;top:520.2px;text-align:center">7</div>
<div class="c r" style="left:285px;width:133px;top:520.2px">1</div>
<div class="c r" style="left:424px;width:92px;top:520.2px">1223</div>
<div class="c r" style="left:522px;width:104px;top:520.2px">9</div>
<div class="c r" style="left:919px;width:112px;top:520.2px">1380909062</div>
<div class="c r" style="left:1036px;width:83px;top:520.2px">65722</div>
<div class="c r" style="left:1125px;width:84px;top:520.2px">1</div>
<div class="c" style="left:635px;top:520.2px">enq: RO - fast object reuse</div>
<div class="c" style="left:244px;width:41px;top:548.9px;text-align:center">8</div>
<div class="c r" style="left:285px;width:133px;top:548.9px">1</div>
<div class="c r" style="left:424px;width:92px;top:548.9px">1250</div>
<div class="c r" style="left:522px;width:104px;top:548.9px">7</div>
<div class="c r" style="left:919px;width:112px;top:548.9px">1380909062</div>
<div class="c r" style="left:1036px;width:83px;top:548.9px">65771</div>
<div class="c r" style="left:1125px;width:84px;top:548.9px">1</div>
<div class="c" style="left:635px;top:548.9px">enq: RO - fast object reuse</div>
<div class="a" style="left:0px;top:583px;width:1211px;height:2px;background:#d8d8d8;"></div>
<div class="a" style="left:0px;top:585px;width:1211px;height:24px;background:#f2f2f2;"></div>
<div class="a" style="left:0;top:589px;font-size:15.5px;line-height:1;white-space:pre;color:#000;letter-spacing:0.38px">ole_3 [RAC]: select count(fid)from</div>
<div class="a" style="left:249.4px;top:589px;font-size:15.5px;line-height:1;white-space:pre;color:#000;letter-spacing:-0.64px">T_HR_SBANKRELHR...</div>
<div class="a" style="left:409.3px;top:589px;font-size:15.5px;line-height:1;white-space:pre;color:#000;letter-spacing:0.6px">completed. (today 11:10)</div>
</body></html>
